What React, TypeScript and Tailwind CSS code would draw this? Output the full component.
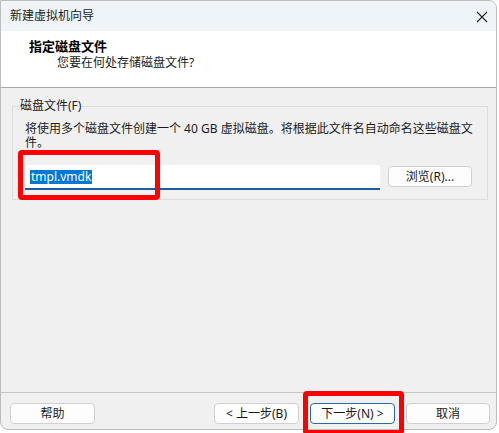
import { type ReactNode } from 'react'

const font = "font-['Noto_Sans','Noto_Sans_CJK_SC',sans-serif]"

const btnCls =
  'flex h-[21px] items-center justify-center rounded-[4px] border bg-[#fdfdfd] text-[12px] leading-none text-[#1b1b1b]'

function Btn({ children, primary, className = '' }: { children: ReactNode; primary?: boolean; className?: string }) {
  return (
    <div
      className={`${btnCls} ${primary ? 'border-[#2a6aaa]' : 'border-[#d0d0d0]'} ${className}`}
    >
      {children}
    </div>
  )
}

export default function App() {
  return (
    <div className={`relative h-[433px] w-[499px] overflow-hidden bg-white ${font}`}>
      <div className="flex h-[430px] w-[497px] flex-col overflow-hidden rounded-tr-[8px] rounded-b-[8px] border border-[#bdbdbd] bg-[#f0f0f0]">
        {/* 标题栏 */}
        <div className="flex h-[30px] shrink-0 items-center justify-between bg-[#eef4f7] pl-[9px] pr-[8px]">
          <span className="text-[12px] leading-[16px] text-[#1b1b1b]">新建虚拟机向导</span>
          <svg width="12" height="12" viewBox="0 0 12 12" className="mt-[1px]">
            <path d="M1 1 L11 11 M11 1 L1 11" stroke="#222" strokeWidth="1.1" fill="none" />
          </svg>
        </div>

        {/* 页头 */}
        <div className="h-[57px] shrink-0 border-b border-[#a8a8a8] bg-white pl-[28px] pt-[7px]">
          <div className="text-[13px] font-bold leading-[16px] text-black">指定磁盘文件</div>
          <div className="mt-[1px] pl-[28px] text-[12px] leading-[16px] text-[#1b1b1b]">
            您要在何处存储磁盘文件?
          </div>
        </div>

        {/* 内容 */}
        <div className="flex-1 pt-[10px]">
          <fieldset className="ml-[11px] w-[476px] border border-[#dcdcdc] pl-[12px] pr-[14px] pb-[9px]">
            <legend className="-ml-[6px] px-[1px] text-[12px] leading-[16px] text-[#1b1b1b]">
              磁盘文件(F)
            </legend>
            <p className="mt-[8px] text-[12px] leading-[14px] text-[#1b1b1b]">
              将使用多个磁盘文件创建一个 40 GB 虚拟磁盘。将根据此文件名自动命名这些磁盘文
              <br />
              件。
            </p>
            <div className="mt-[15px] flex items-start">
              <div className="flex h-[25px] w-[355px] items-center rounded-t-[3px] border-b-2 border-[#1b5c9e] bg-white pl-[5px]">
                <span className="bg-[#0078d7] px-[1px] text-[12px] leading-[14px] text-white">tmpl.vmdk</span>
              </div>
              <Btn className="ml-[8px] mt-[1px] w-[84px]">浏览(R)...</Btn>
            </div>
          </fieldset>
        </div>

        {/* 底部按钮 */}
        <div className="flex h-[37px] shrink-0 items-start border-t border-[#c4c4c4] pl-[9px] pr-[6px] pt-[10px]">
          <Btn className="w-[85px]">帮助</Btn>
          <div className="flex-1" />
          <div className="flex gap-[11px]">
            <Btn className="w-[85px]">&lt; 上一步(B)</Btn>
            <Btn primary className="w-[85px]">下一步(N) &gt;</Btn>
            <Btn className="w-[84px]">取消</Btn>
          </div>
        </div>
      </div>

      {/* 标注框 */}
      <div className="absolute left-[18px] top-[150px] h-[50px] w-[142px] rounded-[4px] border-[5px] border-[#ff0000]" />
      <div className="absolute left-[303px] top-[391px] h-[44px] w-[101px] rounded-[4px] border-[5px] border-[#ff0000]" />
    </div>
  )
}
